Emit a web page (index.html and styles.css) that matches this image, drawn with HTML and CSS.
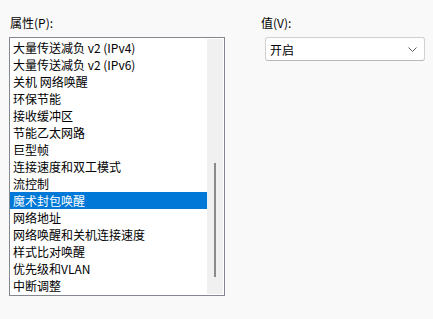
FILE: index.html
```html
<!DOCTYPE html>
<html>
<head>
<meta charset="utf-8">
<link rel="stylesheet" href="styles.css">
</head>
<body>
<div class="page">
  <div class="col-left">
    <div class="label">属性(P):</div>
    <div class="listbox">
      <ul class="items">
        <li>大量传送减负 v2 (IPv4)</li>
        <li>大量传送减负 v2 (IPv6)</li>
        <li>关机 网络唤醒</li>
        <li>环保节能</li>
        <li>接收缓冲区</li>
        <li>节能乙太网路</li>
        <li>巨型帧</li>
        <li>连接速度和双工模式</li>
        <li>流控制</li>
        <li class="selected">魔术封包唤醒</li>
        <li>网络地址</li>
        <li>网络唤醒和关机连接速度</li>
        <li>样式比对唤醒</li>
        <li>优先级和VLAN</li>
        <li>中断调整</li>
      </ul>
      <div class="scrollbar"><div class="thumb"></div></div>
    </div>
  </div>
  <div class="col-right">
    <div class="label label-right">值(V):</div>
    <div class="combo">
      <span class="combo-text">开启</span>
      <svg class="chev" width="9" height="5" viewBox="0 0 9 5"><path d="M0.5 0.5 L4.5 4.5 L8.5 0.5" fill="none" stroke="#5f5f5f" stroke-width="1"/></svg>
    </div>
  </div>
</div>
</body>
</html>
```

FILE: styles.css
```css
html, body {
  margin: 0;
  padding: 0;
  background: #f9f9f9;
}
body {
  width: 433px;
  height: 319px;
  overflow: hidden;
  font-family: "Noto Sans CJK SC", "Noto Sans", sans-serif;
  font-size: 12px;
  color: #000;
}
.page {
  display: flex;
  padding-top: 14px;
}
.col-left {
  margin-left: 9px;
  width: 216px;
}
.label {
  height: 17px;
  line-height: 17px;
  margin-bottom: 6px;
  padding-left: 1px;
}
.listbox {
  box-sizing: border-box;
  height: 259px;
  border: 1px solid #828790;
  background: #fff;
  display: flex;
  padding: 1px 1px 1px 0;
}
.items {
  list-style: none;
  margin: 0;
  padding: 0;
  flex: 1;
}
.items li {
  height: 17px;
  line-height: 17px;
  padding-left: 3px;
  white-space: nowrap;
}
.items li.selected {
  background: #0078d7;
  color: #fff;
}
.scrollbar {
  width: 16px;
  background: #f0f0f0;
  display: flex;
  justify-content: center;
  padding-top: 124px;
  box-sizing: border-box;
}
.thumb {
  width: 2px;
  height: 114px;
  background: #8a8a8a;
}
.col-right {
  margin-left: 36px;
}
.label-right {
  padding-left: 0;
}
.combo {
  box-sizing: border-box;
  margin-left: 4px;
  width: 160px;
  height: 24px;
  border: 1px solid #d0d0d0;
  border-bottom-color: #b8b8b8;
  border-radius: 3px;
  background: #fff;
  display: flex;
  align-items: center;
  justify-content: space-between;
  padding: 0 7px 0 4px;
}
.combo-text {
  line-height: 17px;
}
.chev {
  display: block;
}
```
